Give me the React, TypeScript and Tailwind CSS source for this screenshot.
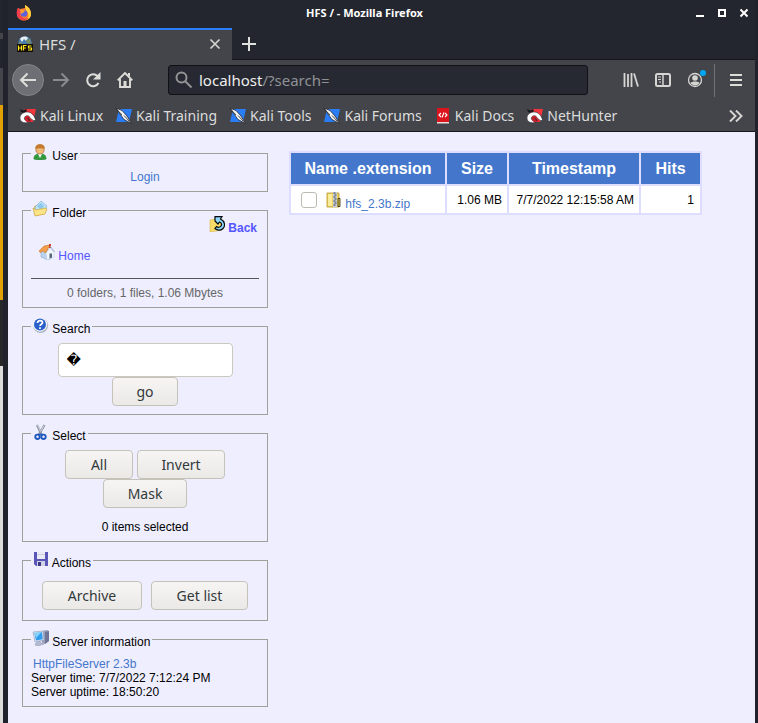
import React from 'react';

const BTN =
    'h-[29px] rounded border border-[#c5c2ba] bg-gradient-to-b from-[#f6f5f4] to-[#eae9e6] text-center font-[Noto_Sans,sans-serif] text-[14px] leading-[27px] text-[#33393b]';

function DragonIcon() {
    return (
        <svg width="16" height="16" viewBox="0 0 16 16" className="shrink-0">
            <path d="M4 1h12l-3 13H8L2 8z" fill="#f0353c" />
            <path d="M0 1l3 1.500L6 1l1 2-3 2-3-1z" fill="#17181d" />
            <path d="M7.500 4C3 4 0 6.500 0 10c0 4 4 5.500 8 4.500l-1.500-2C4 12.500 3.500 9 6 8c2-.8 3.500 0 4 2l4 3 1.500-1.500C14 7 11 4 7.500 4z" fill="#fff" stroke="#26272e" strokeWidth=".6" />
            <path d="M5 10.500c0-2.500 4-3 4.500-.5l2.500 3.500-5 .5c-1.300-.4-2-1.800-2-3.500z" fill="#c8202c" />
            <path d="M7.500 10l1.500 1 .5 2" stroke="#26272e" strokeWidth=".8" fill="none" />
        </svg>
    );
}

function KnifeIcon() {
    return (
        <svg width="16" height="16" viewBox="0 0 16 16" className="shrink-0">
            <path d="M3 1h13l-3 13H0z" fill="#2a7df4" />
            <path d="M0 0l6 2.500 5 5.500 4.500 7.500-7.500-4L4 6z" fill="#f2f4f6" stroke="#20242c" strokeWidth=".8" />
            <path d="M0 .5L6 7M8 7.500l5.500 6" stroke="#20242c" strokeWidth=".8" />
        </svg>
    );
}

function DocsIcon() {
    return (
        <svg width="16" height="16" viewBox="0 0 16 16" className="shrink-0">
            <path d="M2 0h12v14H2z" fill="#dc141c" />
            <path d="M2 14h12v1.500H2z" fill="#e6dcdc" />
            <path d="M6 5L4 7l2 2M10 5l2 2-2 2M9 4.500l-2 5" stroke="#fff" strokeWidth="1.100" fill="none" />
        </svg>
    );
}

function FirefoxIcon() {
    return (
        <svg width="16" height="16" viewBox="0 0 16 16" className="shrink-0">
            <path d="M2 3l2 1 5-1V0c4 2 6 5 6 9 0 4-3 6.500-7 6.500S1 13 1 9c0-3 0-4 1-6z" fill="#fb7a2c" />
            <path d="M9 0c4 2 6 5 6 9 0 3-2 5-4 6 1-2 2-4 1-7-1-2-3-3-3-8z" fill="#ffd23e" />
            <path d="M2 3C0 6 .500 10 2 12c3 4 8 4 11 1-4 2-8 0-9-4l1-3z" fill="#f23c50" />
            <circle cx="8" cy="8.500" r="3.300" fill="#5b62e0" />
            <path d="M4 5c2-1 4 0 5 1L7.500 7.500 5 9z" fill="#ff9c34" />
        </svg>
    );
}

function HfsFavicon() {
    return (
        <svg width="16" height="16" viewBox="0 0 16 16" className="shrink-0">
            <circle cx="8" cy="7" r="6.800" fill="#467cae" />
            <path d="M3 3c2-3 6-3 8-1L9 5 7 3 5 6z" fill="#e8eef2" />
            <path d="M9 4l4-1 1 5-4-1zM2 6l3 1v2H2z" fill="#7a8d62" />
            <rect x="0" y="8" width="16" height="8" fill="#120b08" />
            <path d="M1.500 9.500v5M4.500 9.500v5M1.500 12h3M6.500 14.500v-5h3M6.500 12h2.500M14.500 10h-3v2h3v2h-3.500" stroke="#ffe81c" strokeWidth="1.200" fill="none" />
        </svg>
    );
}

const UserIcon = () => (
    <svg width="18" height="16" viewBox="0 0 18 16" className="inline-block align-baseline">
        <path d="M3 15c0-4 2-5 6-5s6 1 6 5c-3 1-9 1-12 0z" fill="#349b3c" stroke="#23792b" strokeWidth=".7" />
        <path d="M7 10l2 4 2-4z" fill="#fff" />
        <path d="M5 3c0-3 8-3 8 0v4c-1 4-7 4-8 0z" fill="#f1b878" stroke="#a8641f" strokeWidth=".7" />
        <path d="M4.500 4c0-5 9-5 9 0v1c-3-1-6-1-9 0z" fill="#c57a2c" />
    </svg>
);

const FolderIcon = () => (
    <svg width="18" height="16" viewBox="0 0 18 16" className="inline-block align-baseline">
        <path d="M3 5l3-1 8 1v8L4 15z" fill="#e2b840" />
        <path d="M4 6l6-6 6 5-3 7-8-1z" fill="#bfe2f7" stroke="#7fb4d8" strokeWidth=".7" />
        <path d="M6 5l4-3 3 3-3 4z" fill="#8cc8ee" />
        <path d="M2 7l3 2 9-2 2 1-2 5-10 2z" fill="#fbe488" stroke="#cda33c" strokeWidth=".7" />
    </svg>
);

const HelpIcon = () => (
    <svg width="18" height="16" viewBox="0 0 18 16" className="inline-block align-baseline">
        <circle cx="9.500" cy="8.300" r="7.600" fill="#aab2c2" />
        <circle cx="9" cy="7.500" r="7.200" fill="#f4f6fa" />
        <circle cx="9" cy="7.500" r="6" fill="#2b60cb" />
        <path d="M6.500 6c0-3.200 5-2.800 5-.3C11.500 7.300 9 7.200 9 9M9 10.300v1.700" stroke="#fff" strokeWidth="1.700" fill="none" />
    </svg>
);

const ScissorsIcon = () => (
    <svg width="18" height="16" viewBox="0 0 18 16" className="inline-block align-baseline">
        <path d="M6 1l4.500 9.500M13.500 1L8 10.500" stroke="#8b93a0" strokeWidth="2.200" />
        <path d="M6.500 1l3 6.500M13 1.500L10 7" stroke="#dfe4ea" strokeWidth=".8" />
        <circle cx="6.500" cy="12.800" r="2.200" fill="none" stroke="#1e58bd" strokeWidth="1.900" />
        <circle cx="12.500" cy="12.800" r="2.200" fill="none" stroke="#1e58bd" strokeWidth="1.900" />
        <path d="M7 10.500h5" stroke="#1e58bd" strokeWidth="1.500" />
    </svg>
);

const DiskIcon = () => (
    <svg width="18" height="16" viewBox="0 0 18 16" className="inline-block align-baseline">
        <path d="M3 1h14v14H5l-2-2z" fill="#5a55b8" />
        <path d="M6 1h8v7H6z" fill="#e9eaf4" />
        <path d="M6 3h8v1H6z" fill="#cfd0dc" />
        <path d="M6 10h8v5H6z" fill="#cfd2e6" />
        <path d="M7 11h3v4H7z" fill="#3c3a82" />
    </svg>
);

const ServerIcon = () => (
    <svg width="18" height="16" viewBox="0 0 18 16" className="inline-block align-baseline">
        <path d="M11 1l5-1 2 1v10l-4 3-3-1z" fill="#9aa0bd" />
        <path d="M14 2l4-1v10l-4 3z" fill="#6f7597" />
        <path d="M2 2l10-1 1 9-9 2z" fill="#dfe7f2" stroke="#8795b0" strokeWidth=".6" />
        <path d="M3.300 3l7.700-.8.800 7L5 10.500z" fill="#2f9cee" />
        <path d="M3.500 3l7-.7L5 8z" fill="#82d2fb" />
        <path d="M5 13l4-2 1 2 3 1-6 2-3-1z" fill="#b3bcd2" stroke="#8a93ac" strokeWidth=".5" />
    </svg>
);

const BackFolderIcon = () => (
    <svg width="16" height="16" viewBox="0 0 16 16" className="inline-block align-baseline">
        <path d="M1 4l5-1v2h7v9l-12 2z" fill="#f8db68" stroke="#d9b54a" strokeWidth=".6" />
        <path d="M6 .600h7L11.500 3C16 5 16.500 10 14 12.500c-2.500 2.500-6 2-8 0l1.500-2c1.500 1.200 3.500 1 4.500-.5 1-1.500.5-3.500-1.500-4L9 8 6 5z" fill="#8ed8fa" stroke="#05080c" strokeWidth="1.200" />
    </svg>
);

const HomeIcon = () => (
    <svg width="16" height="16" viewBox="0 0 16 16" className="inline-block align-baseline">
        <path d="M2 7l5-2 7 2v6l-5 3-7-3z" fill="#b9d2ee" stroke="#8ea9cc" strokeWidth=".6" />
        <path d="M7 9l4-5 4 4v5l-7 3z" fill="#f3f7fd" stroke="#b7c6dc" strokeWidth=".5" />
        <path d="M0 7l5-5 6-1-4.500 8L4 7 1 8.500z" fill="#f3a04c" stroke="#cb7426" strokeWidth=".6" />
        <path d="M10.500 9.500h2.500v4l-2.500 1z" fill="#51627c" />
        <path d="M10 0h2v4h-2z" fill="#d2432a" />
        <path d="M11 2l4.500 6" stroke="#9fb1cf" />
    </svg>
);

const ZipIcon = () => (
    <svg width="16" height="16" viewBox="0 0 16 16" className="inline-block align-baseline">
        <path d="M1 1h12v14H1z" fill="#eed45e" stroke="#b8962c" strokeWidth=".8" />
        <path d="M2 2h4v12H2z" fill="#fbeb9a" />
        <path d="M7 0h4v15H7z" fill="#c9cdd4" />
        <path d="M7.500 1h2M8.500 3h2M7.500 5h2M8.500 7h2M7.500 9h2M8.500 11h2M7.500 13h2" stroke="#3c4150" strokeWidth="1" />
        <path d="M12 6.500h2v8h-2z" fill="#e5c64a" stroke="#2a2610" strokeWidth=".8" />
    </svg>
);

const bookmarks = [
    { icon: DragonIcon, label: 'Kali Linux' },
    { icon: KnifeIcon, label: 'Kali Training' },
    { icon: KnifeIcon, label: 'Kali Tools' },
    { icon: KnifeIcon, label: 'Kali Forums' },
    { icon: DocsIcon, label: 'Kali Docs' },
    { icon: DragonIcon, label: 'NetHunter' },
];

const files = [
    { name: 'hfs_2.3b.zip', size: '1.06 MB', time: '7/7/2022 12:15:58 AM', hits: 1 },
];

function TitleBar() {
    return (
        <header className="grid h-7 grid-cols-[1fr_auto_1fr] items-center bg-[#23262e] pr-1.5 pb-0.5 pl-2 text-[11px] font-bold text-white">
            <FirefoxIcon />
            <h1 className="pr-9">HFS / - Mozilla Firefox</h1>
            <div className="flex justify-end gap-3">
                <button aria-label="Minimize">
                    <svg width="10" height="10" viewBox="0 0 10 10"><path d="M1 8h8" stroke="#fff" strokeWidth="2" /></svg>
                </button>
                <button aria-label="Maximize">
                    <svg width="10" height="10" viewBox="0 0 10 10"><path d="M2 2h6v6H2z" stroke="#fff" strokeWidth="2" fill="none" /></svg>
                </button>
                <button aria-label="Close window">
                    <svg width="10" height="10" viewBox="0 0 10 10"><path d="M1.500 1.500l7 7M8.500 1.500l-7 7" stroke="#fff" strokeWidth="2" /></svg>
                </button>
            </div>
        </header>
    );
}

function TabStrip() {
    return (
        <div className="flex h-8 bg-[#23262e]">
            <div className="flex w-56 items-center border-t-2 border-[#2a7fff] bg-[#43454b] pr-2.5 pb-0.5 pl-[9px] text-[15px] text-[#dcdcdc]">
                <HfsFavicon />
                <span className="ml-1.5 flex-1">HFS /</span>
                <button aria-label="Close tab">
                    <svg width="14" height="14" viewBox="0 0 14 14"><path d="M2.500 2.500l9 9M11.500 2.500l-9 9" stroke="#d4d4d2" strokeWidth="1.700" /></svg>
                </button>
            </div>
            <div className="flex flex-1 items-center border-b border-[#15171c] pl-2.5">
                <button aria-label="New tab">
                    <svg width="14" height="14" viewBox="0 0 14 14"><path d="M7 0v14M0 7h14" stroke="#e0e0de" strokeWidth="2" /></svg>
                </button>
            </div>
        </div>
    );
}

function NavBar() {
    return (
        <div className="flex h-10 items-center bg-[#43454b] pr-[3px] pl-1">
            <div className="flex">
                <button aria-label="Back" className="mr-px flex size-8 items-center justify-center rounded-full border border-[#85868a] bg-[#6d6f75]">
                    <svg width="18" height="16" viewBox="0 0 18 16"><path d="M17 8H2M8.500 1.500L2 8l6.500 6.500" stroke="#deddda" strokeWidth="2" fill="none" /></svg>
                </button>
                <button aria-label="Forward" className="flex size-8 items-center justify-center">
                    <svg width="18" height="16" viewBox="0 0 18 16"><path d="M1 8h15M9.500 1.500L16 8l-6.500 6.500" stroke="#8a8b8d" strokeWidth="2" fill="none" /></svg>
                </button>
                <button aria-label="Reload" className="flex size-8 items-center justify-center">
                    <svg width="16" height="16" viewBox="0 0 16 16">
                        <path d="M13.500 11A6 6 0 1 1 12.500 4" stroke="#deddda" strokeWidth="2" fill="none" />
                        <path d="M15.500 0v7.500H8z" fill="#deddda" />
                    </svg>
                </button>
                <button aria-label="Home" className="flex size-8 items-center justify-center">
                    <svg width="16" height="16" viewBox="0 0 16 16">
                        <path d="M.7 8.300L8 1l7.300 7.300M3 7v8h10V7" stroke="#deddda" strokeWidth="1.900" fill="none" />
                        <path d="M11 1h2v4l-2-2zM6.500 9h3v5h-3z" fill="#deddda" />
                    </svg>
                </button>
            </div>
            <label className="relative ml-[27px] flex h-[30px] flex-1 items-center rounded-[3px] border border-[#101216] bg-[#272932] pl-1.5">
                <svg width="18" height="18" viewBox="0 0 18 18">
                    <circle cx="6.500" cy="6.500" r="5" stroke="#939496" strokeWidth="2" fill="none" />
                    <path d="M10 10l6.500 6.500" stroke="#939496" strokeWidth="2" />
                </svg>
                <span className="pl-1.5 text-[15px] text-[#eeeeec]">localhost<span className="text-[#909195]">/?search=</span></span>
                <input aria-label="Address" className="absolute inset-0 w-full bg-transparent outline-none" />
            </label>
            <div className="ml-[27px] flex items-center">
                <button aria-label="Library" className="flex size-8 items-center justify-center">
                    <svg width="16" height="14" viewBox="0 0 16 14"><path d="M1.500 0v14M5 1v13M8.500 0v14M11 .5l4 13" stroke="#d6d5d2" strokeWidth="1.800" /></svg>
                </button>
                <button aria-label="Sidebars" className="flex size-8 items-center justify-center">
                    <svg width="16" height="14" viewBox="0 0 16 14">
                        <rect x="1" y="1" width="14" height="12" rx="1.500" stroke="#d6d5d2" strokeWidth="2" fill="none" />
                        <path d="M8 1v12" stroke="#d6d5d2" strokeWidth="1.500" />
                        <path d="M3 4h3M3 6.500h3M4 9h2" stroke="#d6d5d2" />
                    </svg>
                </button>
                <button aria-label="Account" className="relative flex size-8 items-center justify-center">
                    <svg width="16" height="16" viewBox="0 0 16 16">
                        <circle cx="8" cy="8" r="6.500" stroke="#d6d5d2" strokeWidth="1.300" fill="none" />
                        <circle cx="8" cy="6" r="2.800" fill="#d6d5d2" />
                        <path d="M3.500 11c1-2 8-2 9 0-2 3.300-7 3.300-9 0z" fill="#d6d5d2" />
                    </svg>
                    <span className="absolute top-1.5 right-[5px] size-1.5 rounded-full bg-[#00a6f4]" />
                </button>
                <span className="ml-[3px] h-[33px] w-px bg-[#6f7176]" />
                <button aria-label="Menu" className="ml-[5px] flex size-8 items-center justify-center">
                    <svg width="12" height="12" viewBox="0 0 12 12"><path d="M0 1h12M0 6h12M0 11h12" stroke="#deddda" strokeWidth="2" /></svg>
                </button>
            </div>
        </div>
    );
}

function BookmarksBar() {
    return (
        <nav className="flex h-8 items-center gap-[13px] border-b border-[#15171c] bg-[#43454b] pr-3 pl-3 text-[14px] whitespace-nowrap text-[#dcdcdc]">
            {bookmarks.map((item) => (
                <a key={item.label} href="#" className="flex items-center gap-1">
                    <item.icon />
                    {item.label}
                </a>
            ))}
            <button aria-label="More bookmarks" className="ml-auto">
                <svg width="14" height="12" viewBox="0 0 14 12"><path d="M1 .5L6.500 6 1 11.500M7 .5L12.500 6 7 11.500" stroke="#d6d5d2" strokeWidth="2" fill="none" /></svg>
            </button>
        </nav>
    );
}

type PanelProps = {
    title: string;
    icon: React.ReactNode;
    className: string;
    children: React.ReactNode;
};

function Panel({ title, icon, className, children }: PanelProps) {
    return (
        <fieldset className={`border border-[#a19f99] px-2 ${className}`}>
            <legend className="h-[19px] pr-0.5 text-left leading-[14px]">
                {icon} {title}
            </legend>
            {children}
        </fieldset>
    );
}

function Sidebar() {
    return (
        <aside className="flex w-[246px] shrink-0 flex-col gap-[9px]">
            <Panel title="User" icon={<UserIcon />} className="pt-[7px] pb-[7px]">
                <a href="#" className="block text-center text-[#4477cc]">Login</a>
            </Panel>

            <Panel title="Folder" icon={<FolderIcon />} className="pb-[7px]">
                <a href="#" className="-mt-1 block h-[19px] pr-0.5 text-right font-bold text-[#5555ff]">
                    <BackFolderIcon /> Back
                </a>
                <a href="#" className="mt-[9px] block h-[19px] pl-2 text-[#5555ff]">
                    <HomeIcon /> Home
                </a>
                <hr className="mt-[15px] border-[#555555]" />
                <p className="mt-[7px] text-center text-[#666666]">0 folders, 1 files, 1.06 Mbytes</p>
            </Panel>

            <Panel title="Search" icon={<HelpIcon />} className="pt-[7px] pb-2">
                <form className="flex flex-col items-center" onSubmit={(e) => e.preventDefault()}>
                    <input
                        aria-label="Search"
                        defaultValue={'\uFFFD'}
                        className="h-[34px] w-[175px] rounded border border-[#cbc8c0] bg-white px-2 font-[DejaVu_Sans,sans-serif] text-[14px] text-black"
                    />
                    <button type="submit" className={`${BTN} w-[66px]`}>go</button>
                </form>
            </Panel>

            <Panel title="Select" icon={<ScissorsIcon />} className="pt-[7px] pb-[7px]">
                <div className="flex flex-wrap justify-center gap-x-1 px-6">
                    <button className={`${BTN} w-[68px]`}>All</button>
                    <button className={`${BTN} w-[88px]`}>Invert</button>
                    <button className={`${BTN} w-[84px]`}>Mask</button>
                </div>
                <p className="mt-3 text-center">0 items selected</p>
            </Panel>

            <Panel title="Actions" icon={<DiskIcon />} className="pt-[11px] pb-[10px]">
                <div className="flex justify-center gap-[9px]">
                    <button className={`${BTN} w-[100px]`}>Archive</button>
                    <button className={`${BTN} w-[97px]`}>Get list</button>
                </div>
            </Panel>

            <Panel title="Server information" icon={<ServerIcon />} className="pt-2 pb-[7px]">
                <a href="#" className="block pl-0.5 text-[#4477cc]">HttpFileServer 2.3b</a>
                <p>Server time: 7/7/2022 7:12:24 PM</p>
                <p>Server uptime: 18:50:20</p>
            </Panel>
        </aside>
    );
}

function FileTable() {
    return (
        <table className="mt-[7px] w-[413px] table-fixed self-start border-collapse [&_td]:border-2 [&_td]:border-[#ddddff] [&_th]:border-2 [&_th]:border-[#ddddff]">
            <colgroup>
                <col className="w-[156px]" />
                <col className="w-[62px]" />
                <col className="w-[132px]" />
                <col className="w-[61px]" />
            </colgroup>
            <thead>
                <tr className="h-[33px] bg-[#4477cc] text-[16px] text-white">
                    <th>Name .extension</th>
                    <th>Size</th>
                    <th>Timestamp</th>
                    <th>Hits</th>
                </tr>
            </thead>
            <tbody>
                {files.map((file) => (
                    <tr key={file.name} className="h-[29px] bg-white text-right">
                        <td className="pl-2.5">
                            <div className="flex items-center">
                                <input
                                    type="checkbox"
                                    aria-label={file.name}
                                    className="size-4 appearance-none rounded-[3px] border border-[#bebbb3] bg-white"
                                />
                                <a href="#" className="mt-1 ml-[9px] h-[19px] text-[#4477cc]">
                                    <ZipIcon /> {file.name}
                                </a>
                            </div>
                        </td>
                        <td className="pr-[5px]">{file.size}</td>
                        <td className="pr-[5px]">{file.time}</td>
                        <td className="pr-1.5">{file.hits}</td>
                    </tr>
                ))}
            </tbody>
        </table>
    );
}

// Sliver of the desktop that shows to the left of the window
function DesktopEdge() {
    return (
        <div className="flex w-[3px] shrink-0 flex-col bg-[#dcdcda]">
            <div className="h-[33px] bg-[#22252e]" />
            <div className="h-[6px] bg-[#43454b]" />
            <div className="h-[29px] bg-[#22252e]" />
            <div className="h-[37px] bg-[#43454b]" />
            <div className="h-[195px] bg-[#dfa000]" />
            <div className="h-[66px] bg-[#272829]" />
        </div>
    );
}

export default function App() {
    return (
        <div className="flex min-h-screen font-[Noto_Sans,sans-serif]">
            <DesktopEdge />
            <div className="flex min-w-0 flex-1 flex-col border-r-[3px] border-l-[5px] border-[#20232b]">
                <TitleBar />
                <TabStrip />
                <NavBar />
                <BookmarksBar />
                <main className="flex flex-1 gap-[21px] bg-[#eeeeff] pt-3 pl-3.5 font-[Liberation_Sans,sans-serif] text-[12px] leading-[14px] text-black">
                    <Sidebar />
                    <FileTable />
                </main>
            </div>
        </div>
    );
}
